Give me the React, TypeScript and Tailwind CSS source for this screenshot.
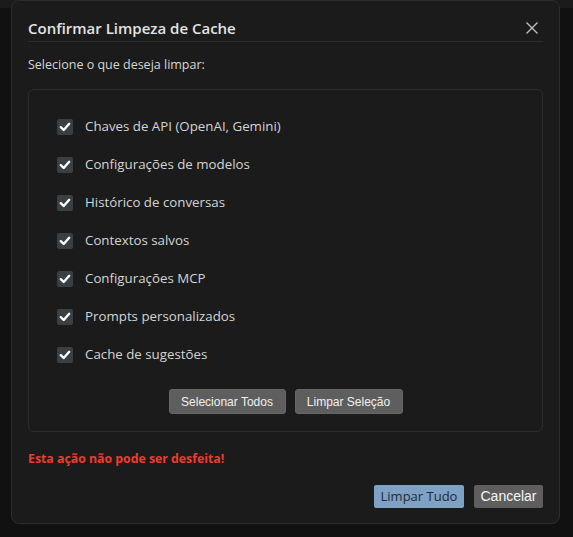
import React from "react";

const items = [
  "Chaves de API (OpenAI, Gemini)",
  "Configurações de modelos",
  "Histórico de conversas",
  "Contextos salvos",
  "Configurações MCP",
  "Prompts personalizados",
  "Cache de sugestões",
];

function Check() {
  return (
    <div className="w-4 h-4 rounded-[2px] bg-[#3a3f44] flex items-center justify-center shrink-0">
      <svg width="12" height="12" viewBox="0 0 12 12" fill="none">
        <path d="M1.8 6.2 L4.7 9 L10.2 2.8" stroke="#ffffff" strokeWidth="2.4" strokeLinecap="round" strokeLinejoin="round" />
      </svg>
    </div>
  );
}

export default function App() {
  return (
    <div className="relative w-[573px] h-[537px] bg-[#111111] overflow-hidden" style={{ fontFamily: '"Open Sans", "Noto Sans", sans-serif' }}>
      <div className="absolute top-0 left-0 right-0 h-[8px] bg-[#1b1b1b]" />
      <div className="absolute left-[11px] top-0 w-[549px] h-[524px] bg-[#1b1b1b] border border-[#2c2c2c] rounded-[8px] px-4 pt-4 pb-[15px] flex flex-col">
        <div className="flex items-center justify-between h-[25px] border-b border-[#2e2e2e] pb-[3px]">
          <div className="text-[15px] font-semibold text-[#e3e3e3] leading-6">Confirmar Limpeza de Cache</div>
          <svg width="14" height="14" viewBox="0 0 14 14" className="mr-[4px]">
            <path d="M1.5 1.5 L12.5 12.5 M12.5 1.5 L1.5 12.5" stroke="#bdbdbd" strokeWidth="1.4" />
          </svg>
        </div>
        <div className="mt-[13px] text-[12.5px] leading-5 text-[#d6d6d6]">Selecione o que deseja limpar:</div>
        <div className="mt-[14px] border border-[#2c2c2c] rounded-[6px] pt-[18px] pb-[17px] pl-[28px] pr-4 flex flex-col">
          {items.map((t) => (
            <div key={t} className="h-[38px] flex items-center gap-3">
              <Check />
              <span className="text-[13.3px] text-[#d4d4d4]">{t}</span>
            </div>
          ))}
          <div className="mt-[15px] flex justify-center gap-[9px] pr-3" style={{ fontFamily: '"Liberation Sans", Arial, sans-serif' }}>
            <button className="h-[25px] w-[117px] rounded-[3px] bg-[#5e5e5e] border border-[#666] text-[12px] text-[#f0f0f0]">Selecionar Todos</button>
            <button className="h-[25px] w-[108px] rounded-[3px] bg-[#5e5e5e] border border-[#666] text-[12px] text-[#f0f0f0]">Limpar Seleção</button>
          </div>
        </div>
        <div className="mt-[17px] text-[12.3px] leading-5 font-bold text-[#f03a2f]">Esta ação não pode ser desfeita!</div>
        <div className="mt-[16px] flex justify-end gap-[10px]">
          <button className="h-[23px] w-[90px] rounded-[2px] bg-[#7ea1c4] text-[13px] text-[#1e2a38]">Limpar Tudo</button>
          <button className="h-[23px] w-[69px] rounded-[2px] bg-[#5e5e5e] text-[14px] text-[#f5f5f5]" style={{ fontFamily: '"Liberation Sans", Arial, sans-serif' }}>Cancelar</button>
        </div>
      </div>
    </div>
  );
}
